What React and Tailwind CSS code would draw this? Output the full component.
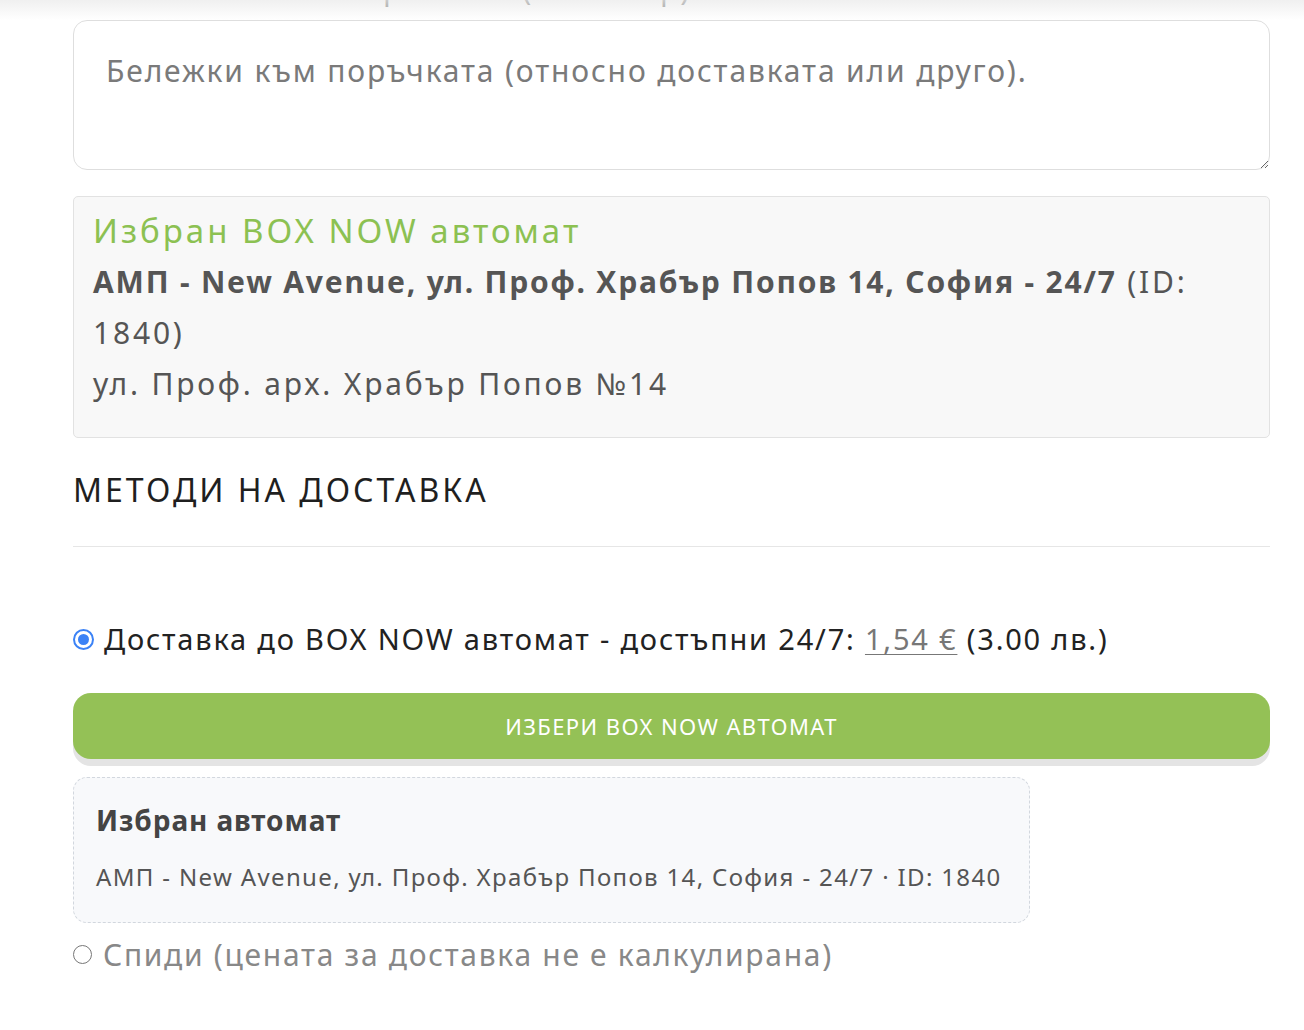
export default function App() {
  return (
    <div className="relative min-h-screen bg-white font-['Noto_Sans',sans-serif] text-[#333]">
      {/* faded strip of the scrolled-off label */}
      <div className="h-[20px] overflow-hidden">
        <div className="ml-[120px] -mt-[31px] text-[30px] leading-[40px] tracking-[2px] text-[#444]">
          Бележки към поръчката (по избор)
        </div>
      </div>
      <div className="pointer-events-none absolute inset-x-0 top-0 h-[20px] bg-gradient-to-b from-[#ececec]/80 to-white/40" />

      <div className="ml-[73px] w-[1197px]">
        <textarea
          readOnly
          className="block h-[150px] w-full rounded-[14px] border border-[#dedede] bg-white px-8 pt-[27px] text-[30px] leading-[45px] tracking-[1.85px] outline-none placeholder:text-[#7a7a7a]"
          placeholder="Бележки към поръчката (относно доставката или друго)."
        />

        <div className="mt-[26px] rounded-[5px] border border-[#e2e2e2] bg-[#f8f8f8] px-[19px] pt-[11px] pb-[28px]">
          <div className="mb-[2px] text-[33px] leading-[46px] tracking-[3px] text-[#8cc152]">Избран BOX NOW автомат</div>
          <p className="text-[30px] leading-[51px] tracking-[2.8px] text-[#555]">
            <b className="tracking-[1.8px]">АМП - New Avenue, ул. Проф. Храбър Попов 14, София - 24/7</b> (ID: 1840)
            <br />
            ул. Проф. арх. Храбър Попов №14
          </p>
        </div>

        <h2 className="mt-[33px] text-[32px] leading-[38px] font-normal tracking-[3px] text-[#1f1f1f]">МЕТОДИ НА ДОСТАВКА</h2>
        <hr className="mt-[37px] border-0 border-t border-[#e6e6e6]" />

        <label className="mt-[70px] flex items-center gap-[10px] text-[29px] leading-[44px] tracking-[1.8px] text-[#222]">
          <span className="flex h-[21px] w-[21px] shrink-0 items-center justify-center rounded-full border-2 border-[#3b82f6] bg-white">
            <span className="h-[11px] w-[11px] rounded-full bg-[#3b82f6]" />
          </span>
          <span>
            Доставка до BOX NOW автомат - достъпни 24/7:{" "}
            <span className="text-[#777] underline decoration-1 underline-offset-4">1,54 €</span> (3.00 лв.)
          </span>
        </label>

        <button className="mt-[32px] flex h-[66px] w-full items-center justify-center rounded-[18px] bg-[#94c156] text-[22px] tracking-[1.4px] text-white shadow-[0_7px_0_#e4e4e4]">
          ИЗБЕРИ BOX NOW АВТОМАТ
        </button>

        <div className="mt-[18px] w-[957px] rounded-[14px] border border-dashed border-[#d2d7de] bg-[#f8f9fb] px-[22px] pt-[21px] pb-[27px]">
          <div className="text-[28px] leading-[42px] font-bold tracking-[0.9px] text-[#444]">Избран автомат</div>
          <div className="mt-[18px] whitespace-nowrap text-[24px] leading-[36px] tracking-[1.35px] text-[#555]">
            АМП - New Avenue, ул. Проф. Храбър Попов 14, София - 24/7 · ID: 1840
          </div>
        </div>

        <label className="mt-[9px] flex items-center gap-[11px] text-[30px] leading-[45px] tracking-[1.7px] text-[#888]">
          <span className="h-[19px] w-[19px] shrink-0 rounded-full border border-[#777]" />
          <span>Спиди (цената за доставка не е калкулирана)</span>
        </label>
      </div>
    </div>
  );
}
